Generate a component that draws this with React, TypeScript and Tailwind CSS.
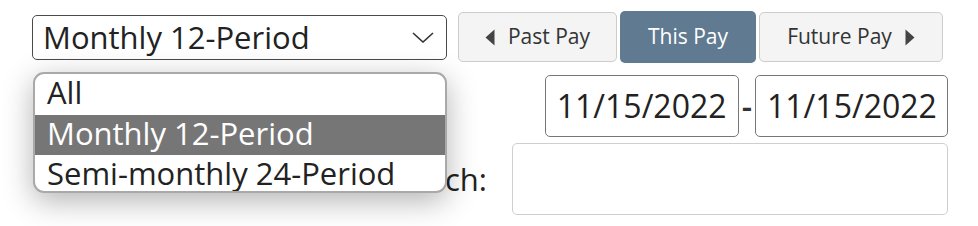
import React from "react";

function LeftTri() {
  return (
    <svg width="10" height="17" viewBox="0 0 10 17" className="shrink-0">
      <path d="M9.5 0.5 L0.5 8.5 L9.5 16.5 Z" fill="#444" />
    </svg>
  );
}
function RightTri() {
  return (
    <svg width="10" height="17" viewBox="0 0 10 17" className="shrink-0">
      <path d="M0.5 0.5 L9.5 8.5 L0.5 16.5 Z" fill="#444" />
    </svg>
  );
}

export default function App() {
  return (
    <div className="relative w-[978px] h-[226px] overflow-hidden bg-white font-['Open_Sans',sans-serif] text-[#222]">
      <div className="flex flex-col pt-[11px] pl-[32px] pr-[30px]">
        <div className="flex items-center">
          <div className="flex h-[45px] w-[415px] items-center justify-between rounded-[5px] border-[1.5px] border-[#4a4a4a] bg-white pl-[10px] pr-[12px]">
            <span className="text-[31px] leading-none">Monthly 12-Period</span>
            <svg width="22" height="11" viewBox="0 0 22 11">
              <path d="M1 1 L11 10 L21 1" fill="none" stroke="#333" strokeWidth="1.6" />
            </svg>
          </div>
          <div className="ml-[11px] flex items-center gap-[3px]">
            <button className="flex h-[50px] w-[159px] items-center justify-center gap-[13px] rounded-[5px] border-[1.5px] border-[#cccccc] bg-[#f4f4f4] text-[21px] text-[#333]">
              <LeftTri />
              <span>Past Pay</span>
            </button>
            <button className="flex h-[52px] w-[136px] items-center justify-center rounded-[5px] bg-[#5f7a91] text-[21px] text-white">
              This Pay
            </button>
            <button className="flex h-[50px] w-[184px] items-center justify-center gap-[13px] rounded-[5px] border-[1.5px] border-[#cccccc] bg-[#f4f4f4] text-[21px] text-[#333]">
              <span>Future Pay</span>
              <RightTri />
            </button>
          </div>
        </div>
        <div className="mt-[12px] flex items-center justify-end">
          <div className="flex h-[62px] w-[194px] items-center rounded-[5px] border-[1.5px] border-[#777] pl-[11px] text-[32px] leading-none">
            11/15/2022
          </div>
          <span className="mx-[3px] text-[32px] font-semibold leading-none text-[#333]">-</span>
          <div className="flex h-[62px] w-[193px] items-center rounded-[5px] border-[1.5px] border-[#777] pl-[11px] text-[32px] leading-none">
            11/15/2022
          </div>
        </div>
        <div className="mt-[6px] flex items-center justify-end">
          <span className="mr-[25px] text-[31px] leading-none">Search:</span>
          <div className="h-[72px] w-[436px] rounded-[5px] border-[1.5px] border-[#cfcfcf] bg-white" />
        </div>
      </div>

      <div className="absolute left-[33px] top-[72px] h-[121px] w-[414px] overflow-hidden rounded-[11px] border-2 border-[#a9a9a9] bg-white shadow-[0_8px_30px_rgba(0,0,0,0.3)]">
        <div className="flex h-[41px] items-center pb-[4px] pl-[12px] text-[31px] leading-none text-[#222]">All</div>
        <div className="flex h-[40px] items-center bg-[#767676] pb-[4px] pl-[12px] text-[31px] leading-none text-white">Monthly 12-Period</div>
        <div className="flex h-[40px] items-center pb-[4px] pl-[12px] text-[31px] leading-none text-[#222]">Semi-monthly 24-Period</div>
      </div>
    </div>
  );
}
